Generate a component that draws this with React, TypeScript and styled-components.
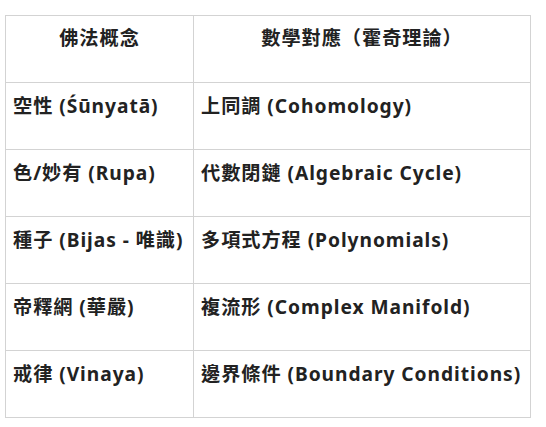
import React from "react";
import styled, { createGlobalStyle } from "styled-components";

const GlobalStyle = createGlobalStyle`
  html, body {
    margin: 0;
    padding: 0;
    background: #ffffff;
  }
  body {
    font-family: "Noto Sans", "Noto Sans CJK TC", sans-serif;
    color: #222222;
  }
`;

const Page = styled.div`
  padding: 15px 0 0 5px;
`;

const Table = styled.table`
  border-collapse: collapse;
  width: 525px;
  table-layout: fixed;
  font-size: 19.2px;
  font-weight: 700;
  letter-spacing: 0.95px;
`;

const HeadCell = styled.th`
  border: 1px solid #d3d3d3;
  padding: 9px 8px 32px;
  text-align: center;
  font-weight: 700;
  line-height: 25px;
  white-space: nowrap;
`;

const Cell = styled.td`
  border: 1px solid #d3d3d3;
  padding: 10px 7px 31px;
  text-align: left;
  line-height: 25px;
  white-space: nowrap;
  vertical-align: top;
`;

const rows: [string, string][] = [
  ["空性 (Śūnyatā)", "上同調 (Cohomology)"],
  ["色/妙有 (Rupa)", "代數閉鏈 (Algebraic Cycle)"],
  ["種子 (Bijas - 唯識)", "多項式方程 (Polynomials)"],
  ["帝釋網 (華嚴)", "複流形 (Complex Manifold)"],
  ["戒律 (Vinaya)", "邊界條件 (Boundary Conditions)"],
];

export default function App() {
  return (
    <>
      <GlobalStyle />
      <Page>
        <Table>
          <colgroup>
            <col style={{ width: 188 }} />
            <col style={{ width: 337 }} />
          </colgroup>
          <thead>
            <tr>
              <HeadCell>佛法概念</HeadCell>
              <HeadCell>數學對應（霍奇理論）</HeadCell>
            </tr>
          </thead>
          <tbody>
            {rows.map(([a, b]) => (
              <tr key={a}>
                <Cell>{a}</Cell>
                <Cell>{b}</Cell>
              </tr>
            ))}
          </tbody>
        </Table>
      </Page>
    </>
  );
}
